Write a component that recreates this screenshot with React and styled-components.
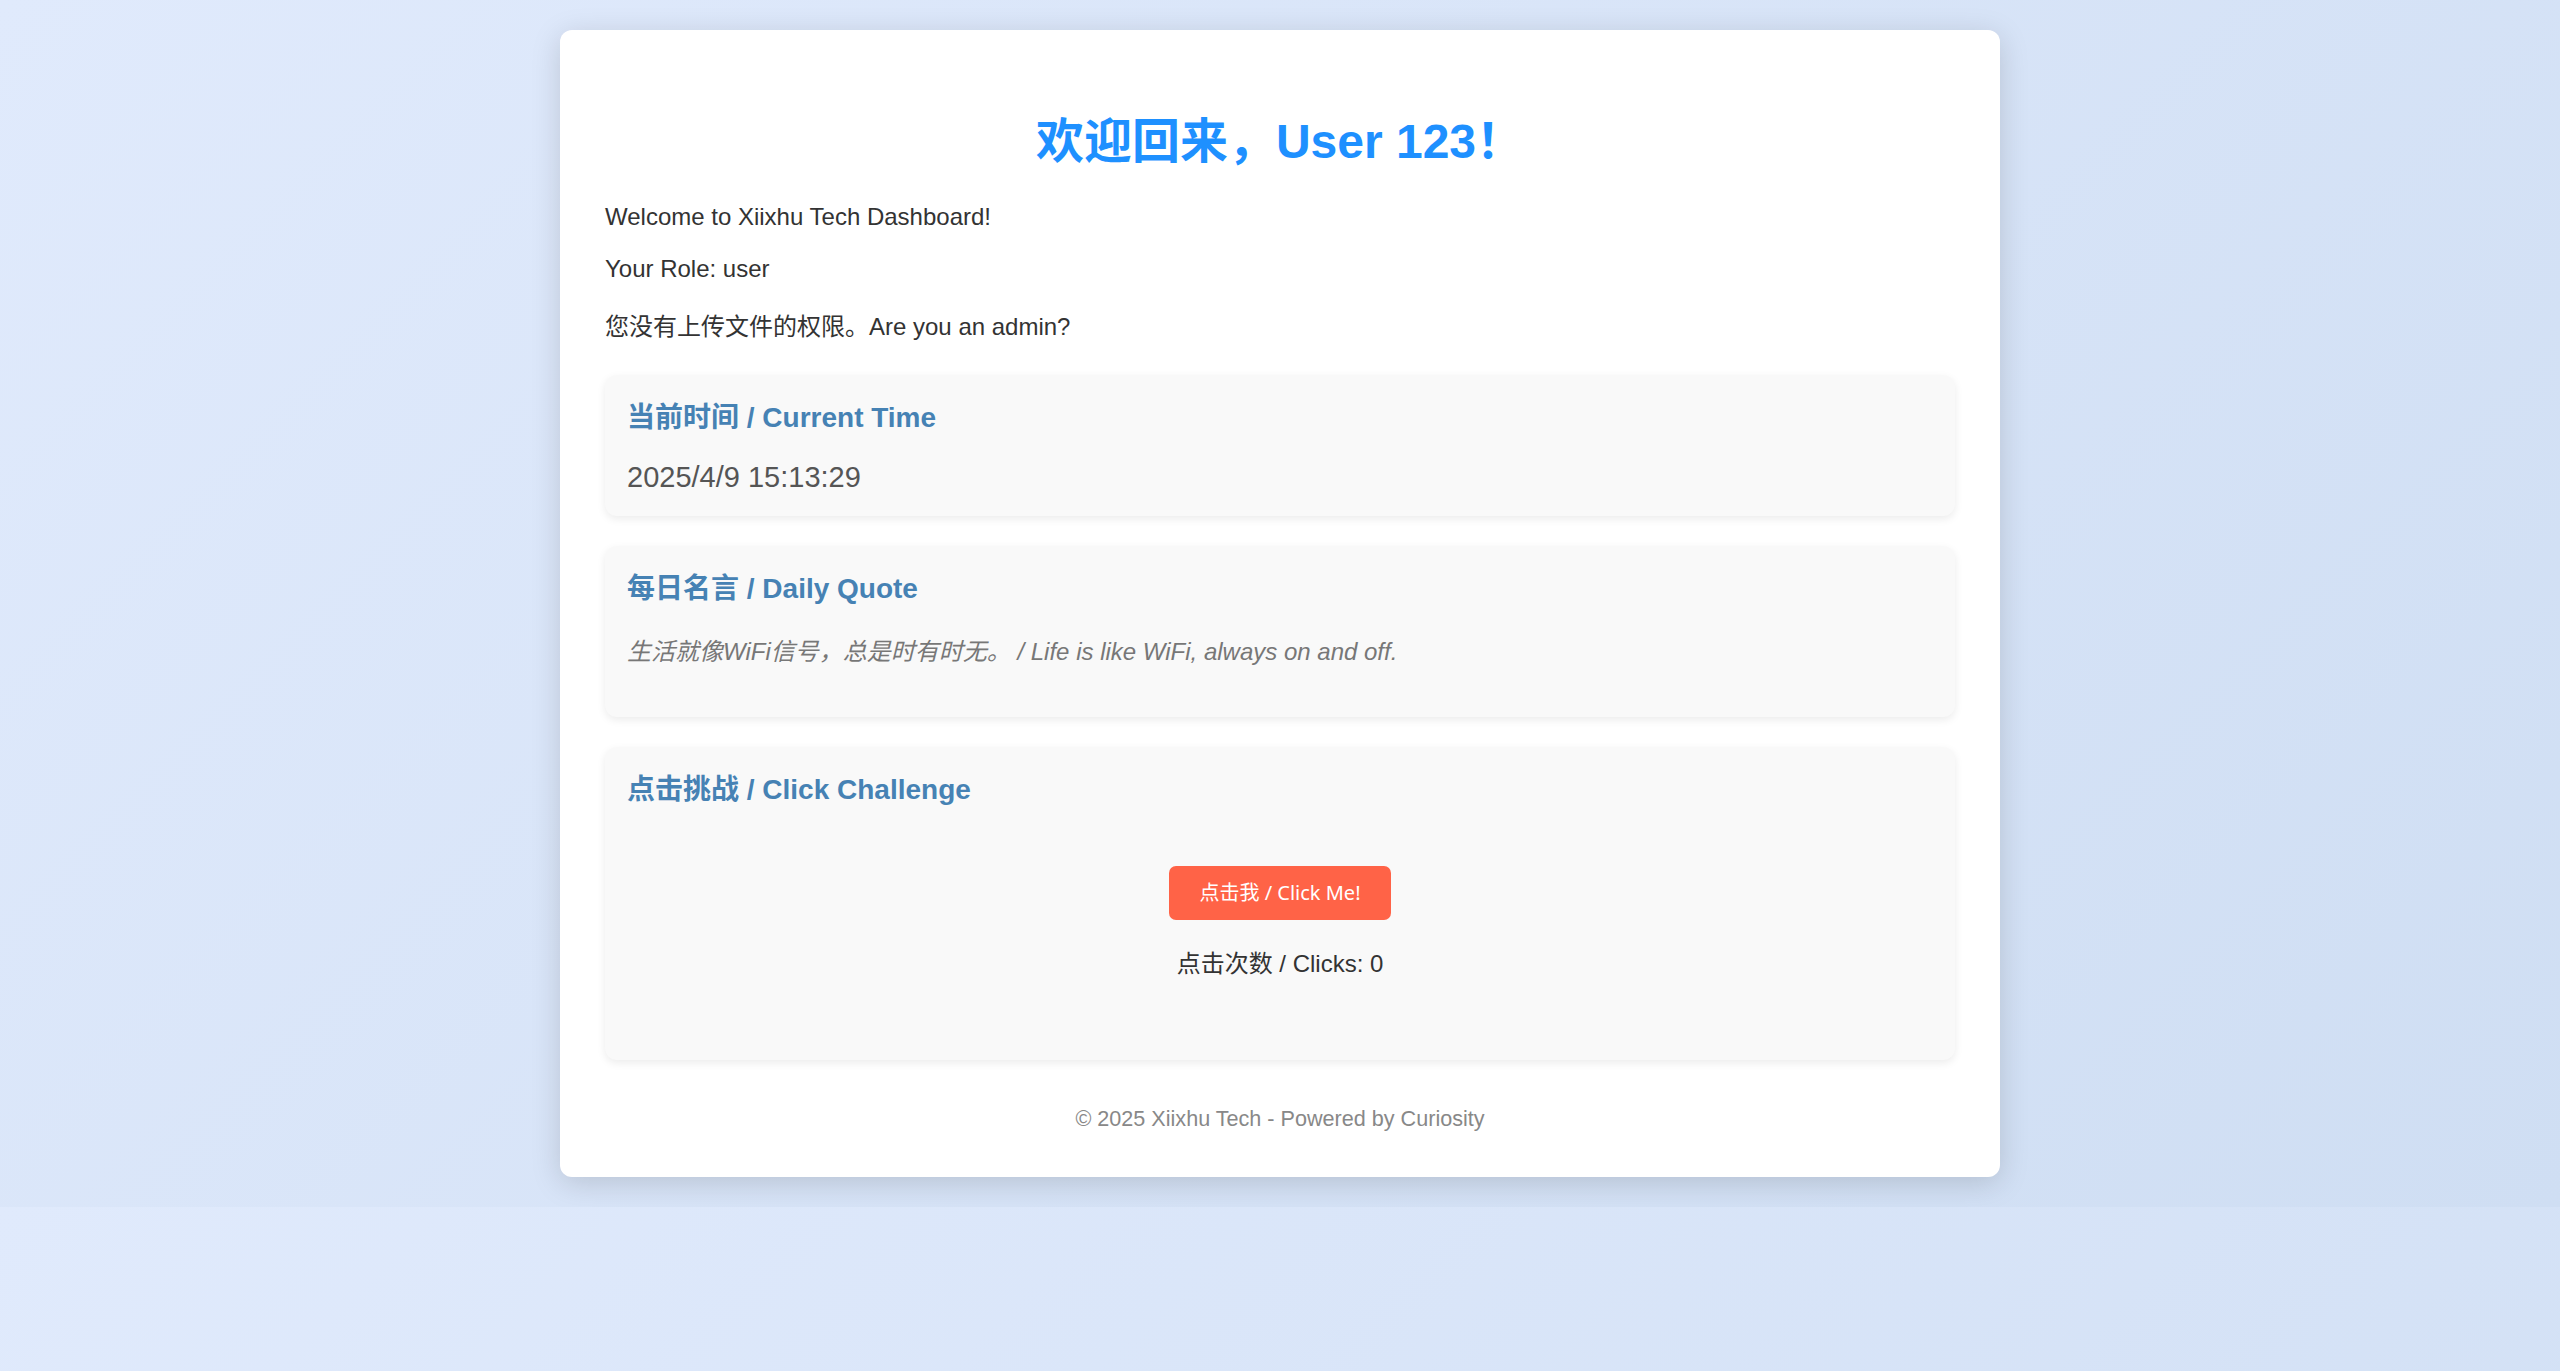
import React, { useState } from "react";
import styled, { createGlobalStyle } from "styled-components";

const GlobalStyle = createGlobalStyle`
  body {
    margin: 0;
    font-family: "Liberation Sans", Arial, "Noto Sans CJK SC", sans-serif;
    background: linear-gradient(135deg, #e0eafc, #cfdef3);
    color: #333;
  }
`;

const Page = styled.div`
  padding: 30px 0;
`;

const Card = styled.div`
  width: 1440px;
  margin: 0 auto;
  box-sizing: border-box;
  padding: 45px;
  background: #fff;
  border-radius: 12px;
  box-shadow: 0 6px 30px rgba(0, 0, 0, 0.15);
`;

const Title = styled.h1`
  font-size: 48px;
  color: #1e90ff;
  text-align: center;
  margin: 27px 0 31px;
`;

const Line = styled.p`
  font-size: 24px;
  margin: 24px 0 ${(p) => (p.$last ? "33px" : "24px")};
`;

const Section = styled.section`
  background: #f9f9f9;
  border-radius: 12px;
  padding: 20px 22px 22px;
  margin: 30px 0;
  box-shadow: 0 3px 8px rgba(0, 0, 0, 0.08);
`;

const SectionTitle = styled.h3`
  font-size: 28px;
  color: #4682b4;
  margin: 0 0 26px;
`;

const Time = styled.div`
  font-size: 29px;
  color: #555;
`;

const Quote = styled.p`
  font-size: 24px;
  font-style: italic;
  color: #777;
  margin: 0 0 28px;
`;

const Game = styled.div`
  text-align: center;
  padding: 33px 0 59px;
`;

const Button = styled.button`
  font-family: "Noto Sans", "Noto Sans CJK SC", sans-serif;
  font-size: 20px;
  line-height: 24px;
  padding: 15px 30px;
  background: #ff6347;
  color: #fff;
  border: none;
  border-radius: 7px;
  cursor: pointer;
`;

const Clicks = styled.p`
  font-size: 24px;
  margin: 24px 0 0;
`;

const Footer = styled.footer`
  text-align: center;
  font-size: 21.6px;
  color: #888;
  margin-top: 46px;
`;

export default function App() {
  const [count, setCount] = useState(0);
  return (
    <Page>
      <GlobalStyle />
      <Card>
        <Title>欢迎回来，User 123！</Title>
        <Line>Welcome to Xiixhu Tech Dashboard!</Line>
        <Line>Your Role: user</Line>
        <Line $last>您没有上传文件的权限。Are you an admin?</Line>

        <Section>
          <SectionTitle>当前时间 / Current Time</SectionTitle>
          <Time>2025/4/9 15:13:29</Time>
        </Section>

        <Section>
          <SectionTitle>每日名言 / Daily Quote</SectionTitle>
          <Quote>生活就像WiFi信号，总是时有时无。 / Life is like WiFi, always on and off.</Quote>
        </Section>

        <Section>
          <SectionTitle>点击挑战 / Click Challenge</SectionTitle>
          <Game>
            <Button onClick={() => setCount(count + 1)}>点击我 / Click Me!</Button>
            <Clicks>点击次数 / Clicks: {count}</Clicks>
          </Game>
        </Section>

        <Footer>© 2025 Xiixhu Tech - Powered by Curiosity</Footer>
      </Card>
    </Page>
  );
}
